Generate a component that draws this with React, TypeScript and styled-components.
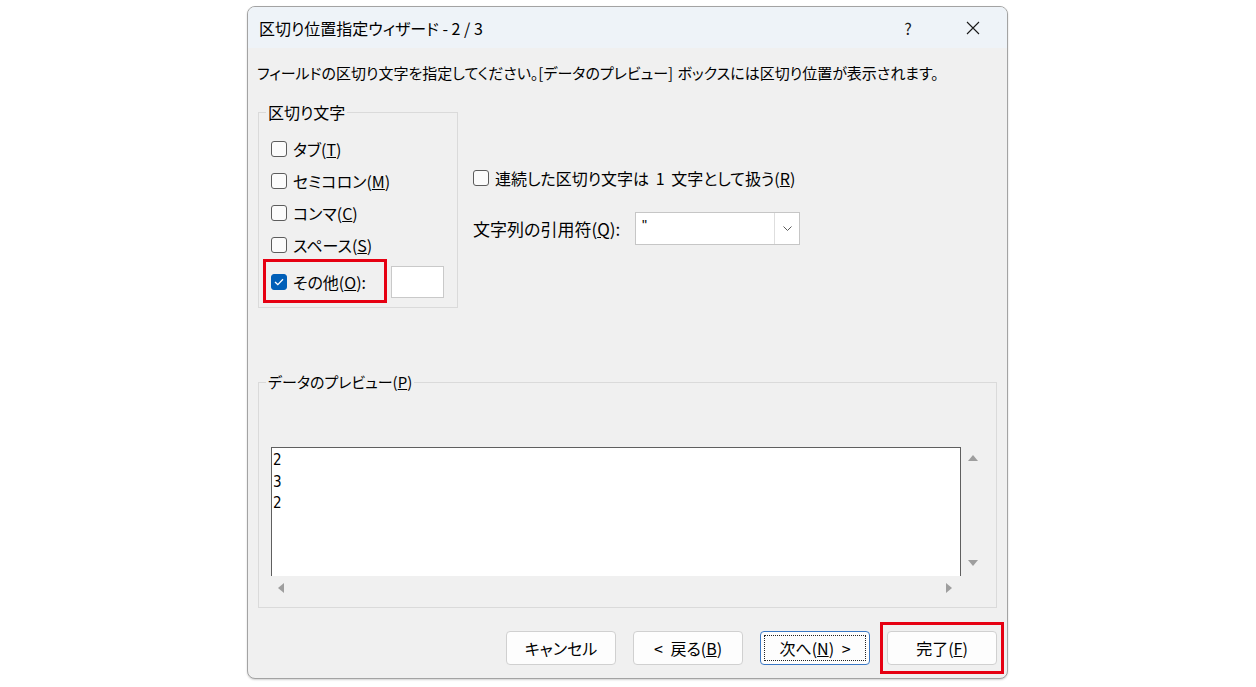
import React from 'react';
import styled, { createGlobalStyle } from 'styled-components';

const GlobalStyle = createGlobalStyle`
  html, body { margin: 0; padding: 0; background: #ffffff; }
  body { font-family: "Noto Sans CJK JP", "Noto Sans", sans-serif; }
  #root { width: 1256px; height: 687px; overflow: hidden; }
`;

const Page = styled.div`
  width: 1256px;
  height: 687px;
  box-sizing: border-box;
  padding: 6px 0 0 247px;
`;

const Dialog = styled.div`
  width: 761px;
  height: 673px;
  box-sizing: border-box;
  border: 1px solid #a3a3a3;
  border-radius: 8px;
  background: #f0f0f0;
  display: flex;
  flex-direction: column;
  overflow: hidden;
  color: #000;
  font-family: "Noto Sans CJK JP", "Noto Sans", sans-serif;
  font-feature-settings: "palt";
  box-shadow: 0 1px 2px rgba(0, 0, 0, 0.18);
`;

const TitleBar = styled.div`
  height: 41px;
  flex: none;
  background: #eef3f8;
  display: flex;
  align-items: center;
  padding-left: 11px;
`;

const Title = styled.div`
  flex: 1;
  line-height: 20px;
  font-size: 16px;
`;

const TitleButton = styled.div<{ $w: number }>`
  width: ${(p) => p.$w}px;
  height: 41px;
  display: flex;
  align-items: center;
  justify-content: center;
  font-size: 16px;
  color: #1a1a1a;
`;

const Body = styled.div`
  display: flex;
  flex-direction: column;
  padding: 0 10px 13px 10px;
`;

const Instruction = styled.div`
  margin-top: 15px;
  margin-left: -1px;
  line-height: 20px;
  font-size: 15px;
  white-space: nowrap;
  word-spacing: 1px;
`;

const TopSection = styled.div`
  display: flex;
  margin-top: 29px;
`;

const Group = styled.div<{ $w?: number }>`
  box-sizing: border-box;
  ${(p) => (p.$w ? `width: ${p.$w}px;` : '')}
  border: 1px solid #dadada;
  display: flex;
  flex-direction: column;
  padding: 0 11px 9px 12px;
`;

const Legend = styled.div<{ $size?: number }>`
  align-self: flex-start;
  margin: -11px 0 0 -5px;
  padding: 0 2px;
  background: #f0f0f0;
  line-height: 20px;
  font-size: ${(p) => p.$size ?? 15}px;
`;

const CheckRow = styled.div<{ $mt?: number; $h?: number }>`
  position: relative;
  display: flex;
  align-items: center;
  height: ${(p) => p.$h ?? 32}px;
  margin-top: ${(p) => p.$mt ?? 0}px;
  font-size: 16px;
  white-space: nowrap;
`;

const Box = styled.span<{ $checked?: boolean }>`
  width: 16px;
  height: 16px;
  box-sizing: border-box;
  flex: none;
  border-radius: 3px;
  border: 1px solid ${(p) => (p.$checked ? '#005fb8' : '#5c5c5c')};
  background: ${(p) => (p.$checked ? '#005fb8' : '#fbfbfb')};
  display: flex;
  align-items: center;
  justify-content: center;
  margin-right: 6px;
`;

const Label = styled.span<{ $minW?: number; $ws?: number }>`
  line-height: 20px;
  ${(p) => (p.$minW ? `min-width: ${p.$minW}px;` : '')}
  ${(p) => (p.$ws ? `word-spacing: ${p.$ws}px;` : '')}
`;

const SmallInput = styled.div`
  width: 53px;
  height: 32px;
  box-sizing: border-box;
  margin-left: 8px;
  background: #fff;
  border: 1px solid #c9c9c9;
`;

const Highlight = styled.div<{ $l: number; $t: number; $w: number; $h: number }>`
  position: absolute;
  left: ${(p) => p.$l}px;
  top: ${(p) => p.$t}px;
  width: ${(p) => p.$w}px;
  height: ${(p) => p.$h}px;
  box-sizing: border-box;
  border: 3px solid #e60012;
  pointer-events: none;
`;

const RightColumn = styled.div`
  display: flex;
  flex-direction: column;
  margin-left: 15px;
  padding-top: 54px;
`;

const FieldRow = styled.div`
  display: flex;
  align-items: center;
  margin-top: 22px;
  height: 33px;
  font-size: 17px;
`;

const FieldLabel = styled.span`
  width: 162px;
  line-height: 20px;
  white-space: nowrap;
`;

const Combo = styled.div`
  width: 165px;
  height: 33px;
  box-sizing: border-box;
  background: #fff;
  border: 1px solid #c6c6c6;
  display: flex;
`;

const ComboValue = styled.div`
  flex: 1;
  padding: 3px 0 0 6px;
  font-size: 14px;
  line-height: 18px;
  font-family: "Liberation Sans", sans-serif;
`;

const ComboArrow = styled.div`
  width: 24px;
  border-left: 1px solid #dedede;
  display: flex;
  align-items: center;
  justify-content: center;
`;

const PreviewGroup = styled(Group)`
  margin-top: 74px;
  padding: 0 11px 7px 12px;
`;

const PreviewGrid = styled.div`
  margin-top: 55px;
  display: grid;
  grid-template-columns: 690px 24px;
  grid-template-rows: 129px 24px;
`;

const ListBox = styled.div`
  background: #fff;
  box-sizing: border-box;
  border-left: 1px solid #5f5f5f;
  border-top: 1px solid #5f5f5f;
  border-right: 1px solid #5f5f5f;
  padding: 2px 0 0 1px;
  font-family: "Liberation Sans Narrow", "DejaVu Sans Condensed", "Liberation Sans", sans-serif;
  font-size: 15px;
  line-height: 21.5px;
  color: #000;
`;

const VScroll = styled.div`
  display: flex;
  flex-direction: column;
  justify-content: space-between;
  align-items: center;
  padding: 8px 0 10px 0;
`;

const HScroll = styled.div`
  display: flex;
  justify-content: space-between;
  align-items: center;
  padding: 0 9px 0 7px;
`;

const ButtonRow = styled.div`
  display: flex;
  justify-content: flex-end;
  gap: 17px;
  margin-top: 23px;
`;

const ButtonWrap = styled.div`
  position: relative;
  display: flex;
`;

const Button = styled.div<{ $focus?: boolean }>`
  width: 110px;
  height: 34px;
  box-sizing: border-box;
  border-radius: 4px;
  background: #fdfdfd;
  border: 1px solid ${(p) => (p.$focus ? '#3b78c4' : '#d0d0d0')};
  ${(p) => (p.$focus ? 'outline: 1px dotted #222; outline-offset: -5px;' : '')}
  display: flex;
  align-items: center;
  justify-content: center;
  font-size: 16px;
  line-height: 20px;
  word-spacing: 4px;
  white-space: nowrap;
`;

const Tri = ({ dir }: { dir: 'up' | 'down' | 'left' | 'right' }) => {
  const pts = {
    up: '0,6 5,0 10,6',
    down: '0,0 10,0 5,6',
    left: '6,0 6,10 0,5',
    right: '0,0 0,10 6,5',
  }[dir];
  const vert = dir === 'up' || dir === 'down';
  return (
    <svg width={vert ? 10 : 6} height={vert ? 6 : 10} viewBox={vert ? '0 0 10 6' : '0 0 6 10'}>
      <polygon points={pts} fill="#9e9e9e" />
    </svg>
  );
};

const Check = ({ checked }: { checked?: boolean }) => (
  <Box $checked={checked}>
    {checked && (
      <svg width="10" height="8" viewBox="0 0 10 8">
        <polyline points="1,4 3.8,6.6 9,1.2" fill="none" stroke="#fff" strokeWidth="1.3" />
      </svg>
    )}
  </Box>
);

export default function App() {
  return (
    <>
      <GlobalStyle />
      <Page>
        <Dialog>
          <TitleBar>
            <Title>区切り位置指定ウィザード - 2 / 3</Title>
            <TitleButton $w={62}>?</TitleButton>
            <TitleButton $w={68}>
              <svg width="14" height="14" viewBox="0 0 14 14">
                <path d="M1 1 L13 13 M13 1 L1 13" stroke="#1a1a1a" strokeWidth="1.1" fill="none" />
              </svg>
            </TitleButton>
          </TitleBar>
          <Body>
            <Instruction>
              フィールドの区切り文字を指定してください。[データのプレビュー] ボックスには区切り位置が表示されます。
            </Instruction>
            <TopSection>
              <Group $w={200}>
                <Legend $size={16}>区切り文字</Legend>
                <CheckRow $mt={11}>
                  <Check />
                  <Label>タブ(<u>T</u>)</Label>
                </CheckRow>
                <CheckRow>
                  <Check />
                  <Label>セミコロン(<u>M</u>)</Label>
                </CheckRow>
                <CheckRow>
                  <Check />
                  <Label>コンマ(<u>C</u>)</Label>
                </CheckRow>
                <CheckRow>
                  <Check />
                  <Label>スペース(<u>S</u>)</Label>
                </CheckRow>
                <CheckRow $mt={5}>
                  <Check checked />
                  <Label $minW={90}>その他(<u>O</u>):</Label>
                  <SmallInput />
                  <Highlight $l={-8} $t={-7} $w={124} $h={44} />
                </CheckRow>
              </Group>
              <RightColumn>
                <CheckRow $h={24}>
                  <Check />
                  <Label $ws={3}>連続した区切り文字は 1 文字として扱う(<u>R</u>)</Label>
                </CheckRow>
                <FieldRow>
                  <FieldLabel>文字列の引用符(<u>Q</u>):</FieldLabel>
                  <Combo>
                    <ComboValue>"</ComboValue>
                    <ComboArrow>
                      <svg width="9" height="5" viewBox="0 0 9 5">
                        <polyline points="0.5,0.5 4.5,4.5 8.5,0.5" fill="none" stroke="#5a5a5a" strokeWidth="1" />
                      </svg>
                    </ComboArrow>
                  </Combo>
                </FieldRow>
              </RightColumn>
            </TopSection>
            <PreviewGroup>
              <Legend>データのプレビュー(<u>P</u>)</Legend>
              <PreviewGrid>
                <ListBox>
                  <div>2</div>
                  <div>3</div>
                  <div>2</div>
                </ListBox>
                <VScroll>
                  <Tri dir="up" />
                  <Tri dir="down" />
                </VScroll>
                <HScroll>
                  <Tri dir="left" />
                  <Tri dir="right" />
                </HScroll>
                <div />
              </PreviewGrid>
            </PreviewGroup>
            <ButtonRow>
              <ButtonWrap>
                <Button>キャンセル</Button>
              </ButtonWrap>
              <ButtonWrap>
                <Button>&lt; 戻る(<u>B</u>)</Button>
              </ButtonWrap>
              <ButtonWrap>
                <Button $focus>次へ(<u>N</u>) &gt;</Button>
              </ButtonWrap>
              <ButtonWrap>
                <Button>完了(<u>F</u>)</Button>
                <Highlight $l={-7} $t={-9} $w={124} $h={52} />
              </ButtonWrap>
            </ButtonRow>
          </Body>
        </Dialog>
      </Page>
    </>
  );
}
